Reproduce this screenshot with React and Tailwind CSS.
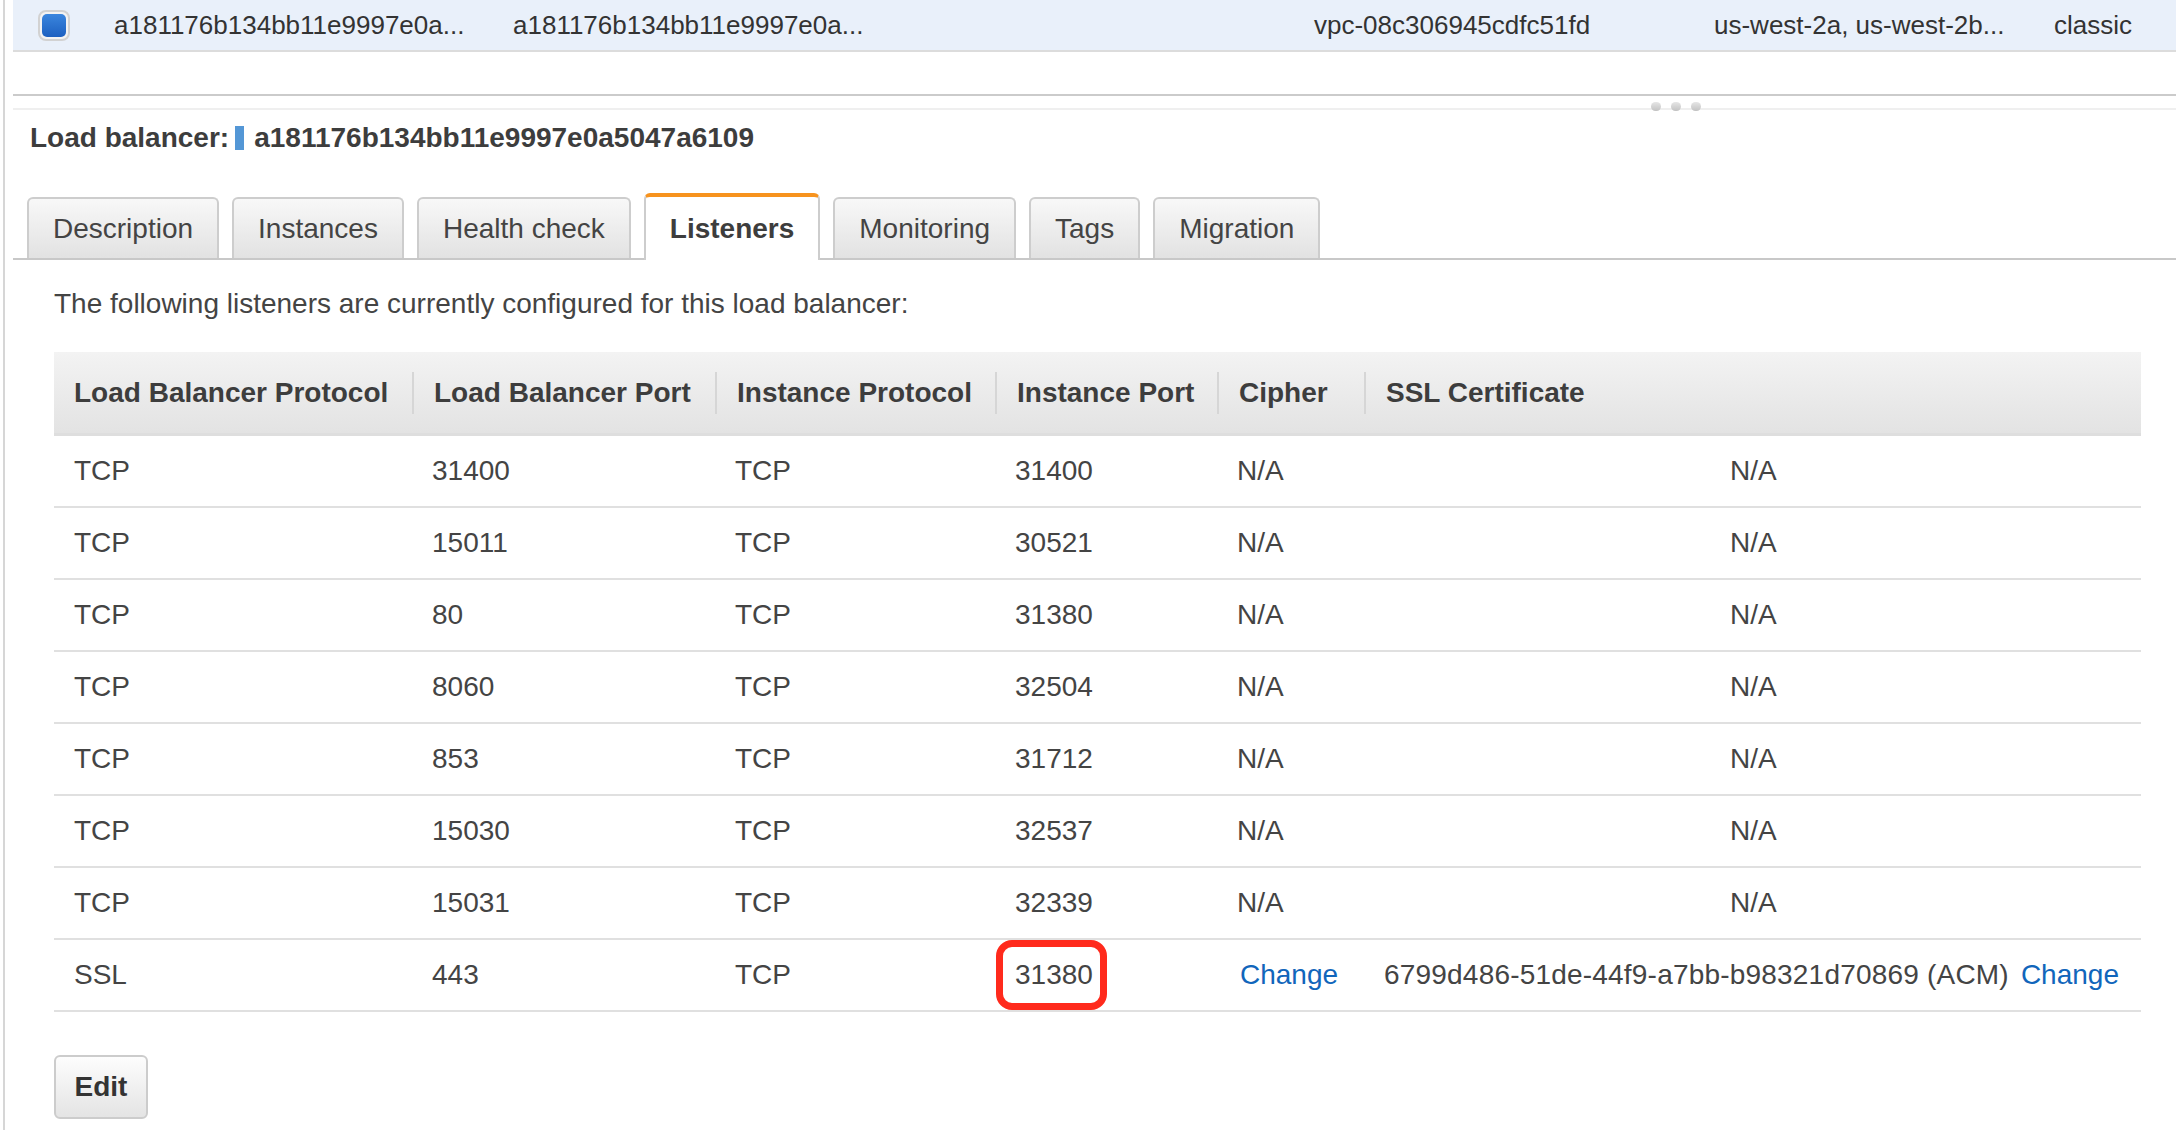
import React from "react";

// 顶部列表中被选中的负载均衡器行
const topRow = [
  { w: "w-[399px]", text: "a181176b134bb11e9997e0a..." },
  { w: "w-[801px]", text: "a181176b134bb11e9997e0a..." },
  { w: "w-[400px]", text: "vpc-08c306945cdfc51fd" },
  { w: "w-[340px]", text: "us-west-2a, us-west-2b..." },
  { w: "", text: "classic" },
];

const tabs = ["Description", "Instances", "Health check", "Listeners", "Monitoring", "Tags", "Migration"];

const headers = [
  "Load Balancer Protocol",
  "Load Balancer Port",
  "Instance Protocol",
  "Instance Port",
  "Cipher",
  "SSL Certificate",
];

const listeners = [
  ["TCP", "31400", "TCP", "31400"],
  ["TCP", "15011", "TCP", "30521"],
  ["TCP", "80", "TCP", "31380"],
  ["TCP", "8060", "TCP", "32504"],
  ["TCP", "853", "TCP", "31712"],
  ["TCP", "15030", "TCP", "32537"],
  ["TCP", "15031", "TCP", "32339"],
];

const gridCols = "grid grid-cols-[358px_303px_280px_222px_147px_1fr]";

const Checkbox = () => (
  <div className="ml-[2px] w-[32px] h-[31px] rounded-[8px] border-2 border-[#d2d2d2] bg-[#f3f3f3] p-[2px]">
    <div className="w-full h-full rounded-[5px] bg-linear-to-b from-[#3b86de] to-[#1d60c0]" />
  </div>
);

const Tab = ({ label, active }) =>
  active ? (
    <div className="relative z-10 -mb-[2px] h-[67px] flex items-center px-[24px] rounded-t-[6px] border-t-4 border-x-2 border-t-[#f7931e] border-x-[#cdcdcd] bg-white font-bold text-[#3d3d3d]">
      {label}
    </div>
  ) : (
    <div className="h-[61px] flex items-center px-[24px] rounded-t-[6px] border-2 border-b-0 border-[#cdcdcd] bg-linear-to-b from-[#f8f8f8] to-[#e2e2e2] text-[#444]">
      {label}
    </div>
  );

const Cell = ({ children, className = "" }) => (
  <div className={`h-[70px] flex items-center pl-[20px] ${className}`}>{children}</div>
);

export default function App() {
  return (
    <div className="w-[2176px] h-[1130px] overflow-hidden bg-white font-['Liberation_Sans',Arial,sans-serif] text-[28px] text-[#444]">
      <div className="ml-[3px] h-full border-l-2 border-[#d6d6d6] pl-[8px]">
        {/* 选中行 */}
        <div className="flex h-[52px] items-center border-b-2 border-[#dcdcdc] bg-[#e9f0fa] text-[26px] text-[#333]">
          <div className="w-[101px] pl-[23px]">
            <Checkbox />
          </div>
          {topRow.map((c, i) => (
            <div key={i} className={c.w}>
              {c.text}
            </div>
          ))}
        </div>

        {/* 分割条 */}
        <div className="mt-[42px] h-[16px] border-t-2 border-b-2 border-t-[#cbcbcb] border-b-[#efefef] flex items-end gap-[10px] pl-[1638px]">
          {[0, 1, 2].map((i) => (
            <div key={i} className="w-[10px] h-[9px] -mb-[3px] rounded-full bg-linear-to-b from-[#e6e6e6] to-[#c2c2c2]" />
          ))}
        </div>

        {/* 标题 */}
        <div className="h-[56px] flex items-center pl-[17px] font-bold text-[#3d3d3d]">
          <span>Load balancer:</span>
          <span className="ml-[6px] w-[9px] h-[24px] bg-[#5497d6]" />
          <span className="ml-[10px]">a181176b134bb11e9997e0a5047a6109</span>
        </div>

        {/* 标签页 */}
        <div className="mt-[27px] flex items-end gap-[13px] border-b-2 border-[#c8c8c8] pl-[14px]">
          {tabs.map((t) => (
            <Tab key={t} label={t} active={t === "Listeners"} />
          ))}
        </div>

        <div className="pl-[41px]">
          <p className="mt-[24px] leading-[40px]">The following listeners are currently configured for this load balancer:</p>

          {/* 监听器表格 */}
          <div className="mt-[28px] w-[2087px]">
            <div className={`${gridCols} h-[84px] border-b-[3px] border-[#dedede] bg-linear-to-b from-[#f3f3f3] to-[#e3e3e3] font-bold text-[#3d3d3d]`}>
              {headers.map((h, i) => (
                <div key={h} className="h-[81px] flex items-center">
                  <div className={`h-[42px] flex items-center pl-[20px] ${i > 0 ? "border-l-2 border-[#d6d6d6]" : ""}`}>{h}</div>
                </div>
              ))}
            </div>

            {listeners.map((r, i) => (
              <div key={i} className={`${gridCols} border-b-2 border-[#e0e0e0]`}>
                {r.map((v, j) => (
                  <Cell key={j}>{v}</Cell>
                ))}
                <Cell>N/A</Cell>
                <Cell className="pl-[366px]">N/A</Cell>
              </div>
            ))}

            <div className={`${gridCols} border-b-2 border-[#e0e0e0]`}>
              <Cell>SSL</Cell>
              <Cell>443</Cell>
              <Cell>TCP</Cell>
              <div className="relative">
                <Cell>31380</Cell>
                <div className="absolute left-[1px] top-0 w-[111px] h-[70px] rounded-[16px] border-[7px] border-[#ff2a1c]" />
              </div>
              <Cell>
                <a className="ml-[3px] text-[#1166bb]">Change</a>
              </Cell>
              <Cell>
                <span className="tracking-[0.2px]">6799d486-51de-44f9-a7bb-b98321d70869 (ACM)</span>
                <a className="ml-[12px] text-[#1166bb]">Change</a>
              </Cell>
            </div>
          </div>

          <button className="mt-[43px] w-[94px] h-[64px] rounded-[6px] border-2 border-[#cccccc] bg-linear-to-b from-[#fdfdfd] to-[#e4e4e4] font-bold text-[#333]">
            Edit
          </button>
        </div>
      </div>
    </div>
  );
}
